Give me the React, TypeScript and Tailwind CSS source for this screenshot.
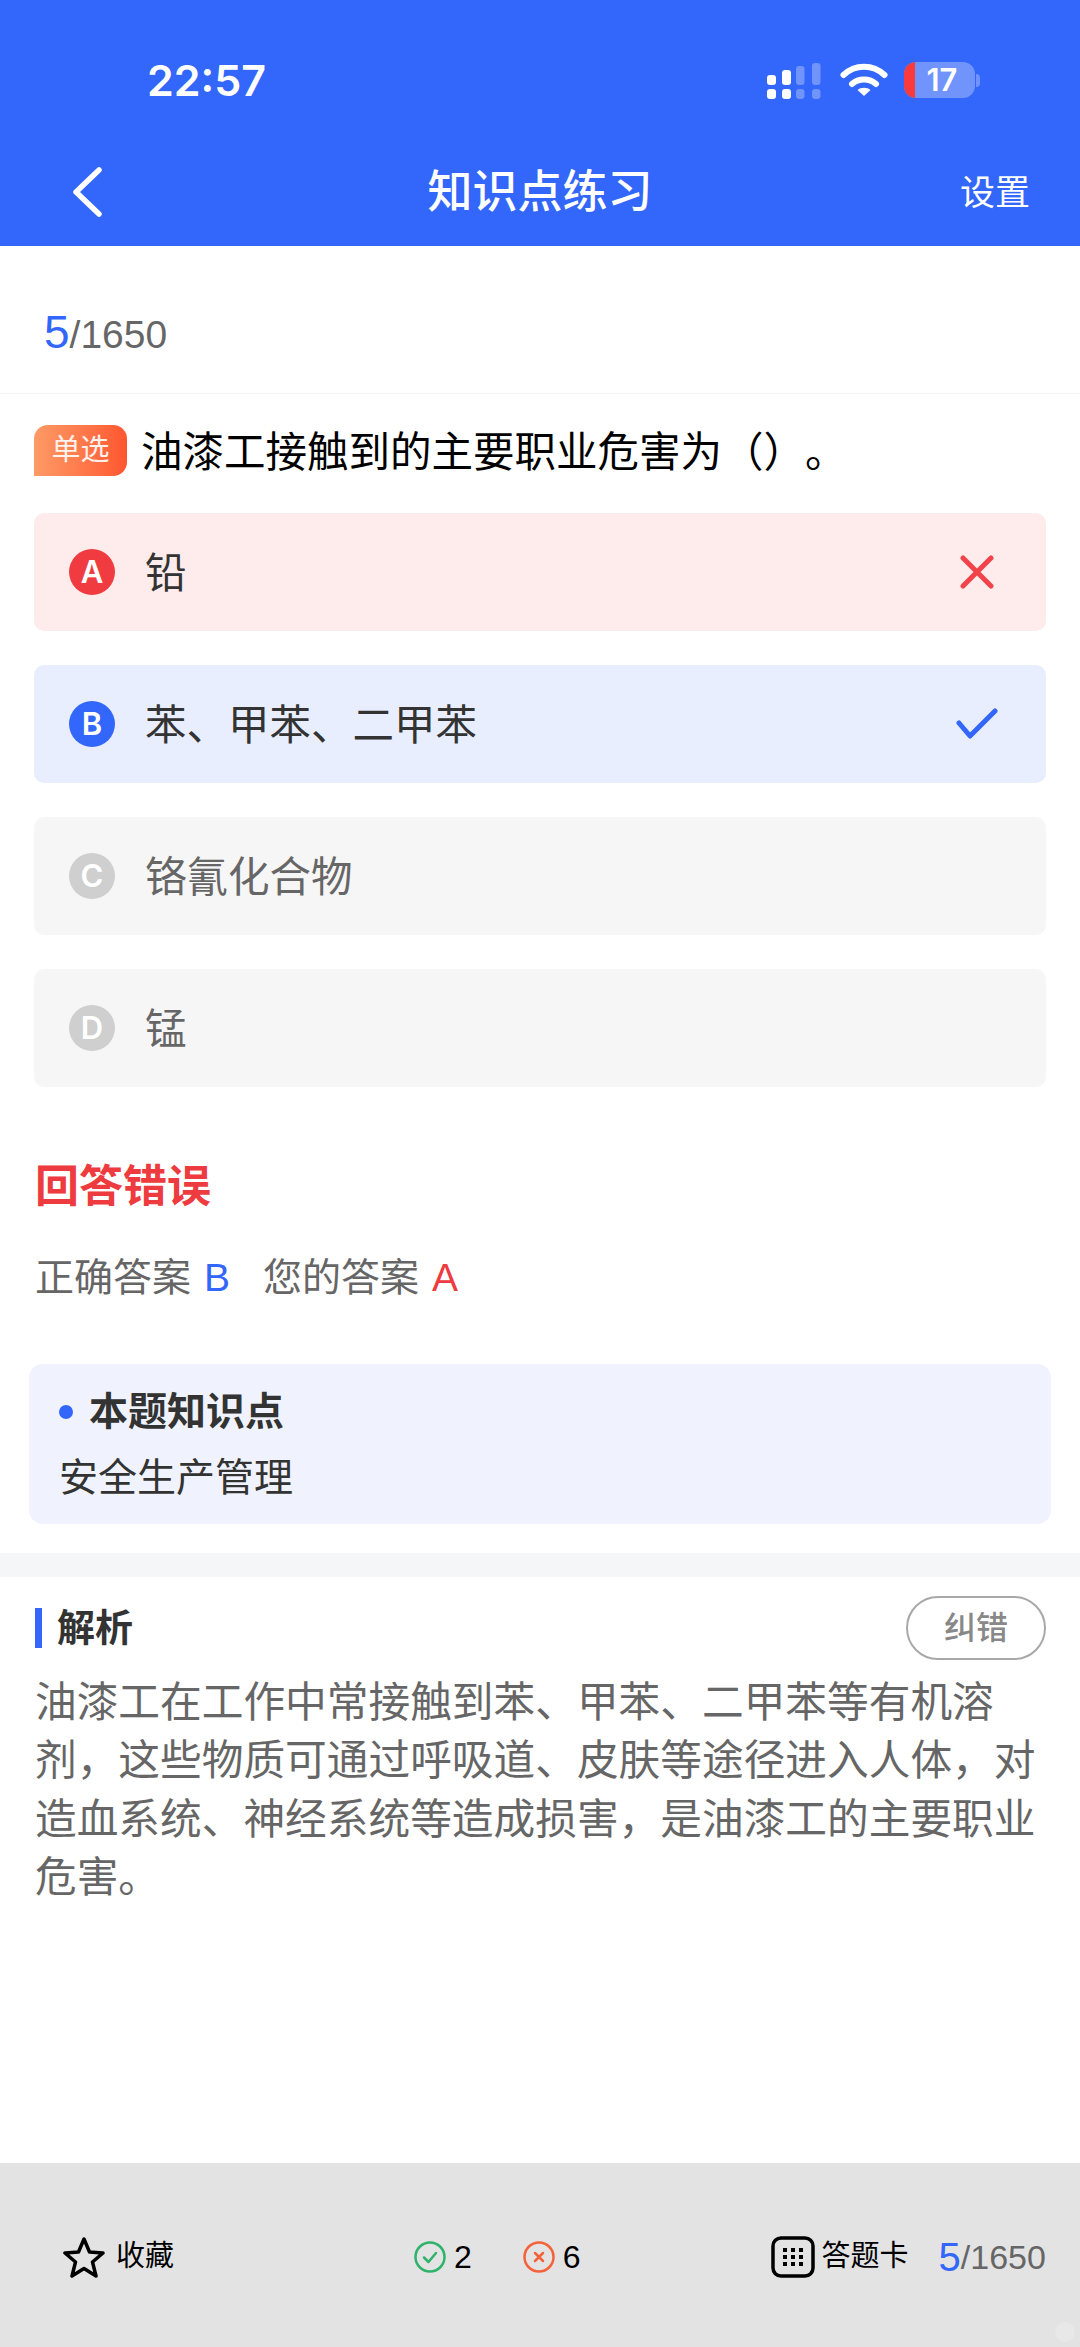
import React from 'react';

const FONT = "font-['Liberation_Sans','Noto_Sans_CJK_SC',sans-serif]";

const options = [
  { key: 'A', text: '铅', box: 'bg-[#feecec]', badge: 'bg-[#f03c41]', label: 'text-[#333333]', mark: 'wrong' },
  { key: 'B', text: '苯、甲苯、二甲苯', box: 'bg-[#e9eefe]', badge: 'bg-[#3366fa]', label: 'text-[#333333]', mark: 'right' },
  { key: 'C', text: '铬氰化合物', box: 'bg-[#f6f6f6]', badge: 'bg-[#cfcfcf]', label: 'text-[#666666]', mark: '' },
  { key: 'D', text: '锰', box: 'bg-[#f6f6f6]', badge: 'bg-[#cfcfcf]', label: 'text-[#666666]', mark: '' },
];

const StatusIcons = () => (
  <div className="flex items-center">
    <svg width="54" height="37" viewBox="0 0 54 37" fill="#fff">
      <rect x="0" y="13" width="9" height="10" rx="3" />
      <rect x="15" y="8" width="9" height="15" rx="3" />
      <rect x="29" y="4" width="8.5" height="19" rx="3" opacity="0.3" />
      <rect x="45" y="1" width="8.5" height="22" rx="3" opacity="0.3" />
      <rect x="0" y="27" width="9" height="10" rx="3" />
      <rect x="15" y="27" width="9" height="10" rx="3" />
      <rect x="29" y="27" width="8.5" height="10" rx="3" opacity="0.3" />
      <rect x="45" y="27" width="8.5" height="10" rx="3" opacity="0.3" />
    </svg>
    <svg className="ml-[19px]" width="48" height="34" viewBox="0 0 48 34" fill="none" stroke="#fff" strokeWidth="6" strokeLinecap="round">
      <path d="M3.5 12 C15 1 33 1 44.5 12" />
      <path d="M12 21 C18.5 15 29.5 15 36 21" />
      <path d="M24 33 L17.5 27 C21 24 27 24 30.5 27 Z" fill="#fff" stroke="none" />
    </svg>
    <div className="ml-[16px] flex items-center">
      <div className="flex h-[36px] w-[71px] overflow-hidden rounded-[12px] bg-white/30">
        <div className="h-full w-[11px] bg-[#fa3a3c]" />
        <div className="flex flex-1 items-center justify-center pr-[6px] font-['Inter',sans-serif] text-[31px] font-semibold text-white">17</div>
      </div>
      <div className="ml-[1px] h-[13px] w-[4px] rounded-r-full bg-white/30" />
    </div>
  </div>
);

const Mark = ({ type }: { type: string }) => {
  if (type === 'wrong') {
    return (
      <svg width="34" height="34" viewBox="0 0 34 34" fill="none" stroke="#f0444a" strokeWidth="5" strokeLinecap="round">
        <path d="M3 3 L31 31 M31 3 L3 31" />
      </svg>
    );
  }
  if (type === 'right') {
    return (
      <svg width="42" height="32" viewBox="0 0 42 32" fill="none" stroke="#3366fa" strokeWidth="5" strokeLinecap="round" strokeLinejoin="round">
        <path d="M3 15 L14 28 L39 3" />
      </svg>
    );
  }
  return null;
};

export default function App() {
  return (
    <div className={`flex min-h-[2347px] w-[1080px] flex-col bg-white ${FONT}`}>
      <header className="h-[246px] bg-[#3366fa] text-white">
        <div className="flex h-[52px] translate-y-[54px] items-center justify-between pl-[147px] pr-[100px]">
          <span className="font-['Inter',sans-serif] text-[43px] font-semibold leading-none">22:57</span>
          <StatusIcons />
        </div>
        <div className="mt-[98px] grid h-[86px] grid-cols-3 items-center px-[50px]">
          <svg className="-mt-[3px] ml-[22px]" width="30" height="50" viewBox="0 0 30 50" fill="none" stroke="#fff" strokeWidth="5.5" strokeLinecap="round" strokeLinejoin="round">
            <path d="M27 3 L4 25 L27 47" />
          </svg>
          <span className="whitespace-nowrap text-center text-[45px] font-medium">知识点练习</span>
          <span className="text-right text-[35px]">设置</span>
        </div>
      </header>

      <div className="flex h-[148px] items-baseline border-b border-[#f3f3f3] pl-[44px] pt-[56px]">
        <span className="text-[46px] leading-[60px] text-[#3366fa]">5</span>
        <span className="text-[39px] leading-[60px] text-[#666666]">/1650</span>
      </div>

      <div className="flex h-[119px] items-center pl-[34px] pb-[6px]">
        <span className="flex h-[51px] w-[93px] items-center justify-center rounded-[14px] rounded-bl-none bg-gradient-to-r from-[#ff9a66] to-[#ff552f] text-[29px] text-white/90">
          单选
        </span>
        <span className="ml-[14px] mt-[6px] text-[41.5px] text-black [text-spacing-trim:space-all]">油漆工接触到的主要职业危害为（）。</span>
      </div>

      <div className="flex flex-col gap-[34px] px-[34px]">
        {options.map((o) => (
          <div key={o.key} className={`flex h-[118px] items-center rounded-[10px] pl-[35px] pr-[47px] ${o.box}`}>
            <span className={`flex h-[46px] w-[46px] items-center justify-center rounded-full font-['Inter',sans-serif] text-[31px] font-semibold text-white ${o.badge}`}>
              {o.key}
            </span>
            <span className={`ml-[30px] flex-1 pt-[4px] text-[41.5px] ${o.label}`}>{o.text}</span>
            <div className="flex w-[44px] justify-center">
              <Mark type={o.mark} />
            </div>
          </div>
        ))}
      </div>

      <div className="mt-[70px] pl-[35px] text-[44px] font-bold leading-[60px] text-[#ee3b40]">回答错误</div>

      <div className="mt-[31px] flex items-center pl-[35px] text-[39px] leading-[60px] text-[#666666]">
        <span>正确答案</span>
        <span className="ml-[13px] text-[#3366fa]">B</span>
        <span className="ml-[33px]">您的答案</span>
        <span className="ml-[13px] text-[#ee3b40]">A</span>
      </div>

      <div className="mx-[29px] mt-[56px] h-[160px] rounded-[14px] bg-[#f0f3fe] px-[30px] pt-[20px]">
        <div className="flex items-center text-[39px] font-bold leading-[56px] text-[#333333]">
          <span className="h-[14px] w-[14px] rounded-full bg-[#3366fa]" />
          <span className="ml-[16px]">本题知识点</span>
        </div>
        <div className="mt-[10px] text-[39px] leading-[56px] text-[#333333]">安全生产管理</div>
      </div>

      <div className="mt-[29px] h-[24px] bg-[#f5f6f8]" />

      <div className="flex items-center justify-between pl-[35px] pr-[34px] pt-[19px]">
        <div className="flex items-center">
          <span className="h-[40px] w-[7px] bg-[#3366fa]" />
          <span className="ml-[15px] text-[38px] font-bold text-[#333333]">解析</span>
        </div>
        <span className="flex h-[64px] w-[140px] items-center justify-center rounded-full border-2 border-[#a8a8a8] text-[32px] font-medium text-[#888888]">
          纠错
        </span>
      </div>

      <p className="mt-[14px] px-[35px] text-[41.7px] leading-[58.4px] text-[#666666]">
        油漆工在工作中常接触到苯、甲苯、二甲苯等有机溶剂，这些物质可通过呼吸道、皮肤等途径进入人体，对造血系统、神经系统等造成损害，是油漆工的主要职业危害。
      </p>

      <div className="flex-1" />

      <footer className="relative flex h-[184px] items-center bg-[#e3e3e3] pt-[4px] text-black">
        <div className="flex w-[414px] items-center pl-[62px]">
          <svg width="44" height="42" viewBox="0 0 44 42" fill="none" stroke="#000" strokeWidth="3.5" strokeLinejoin="round">
            <path d="M22 3 L27.5 16 L41 17 L30.5 26 L34 40 L22 32.5 L10 40 L13.5 26 L3 17 L16.5 16 Z" />
          </svg>
          <span className="ml-[10px] text-[29px]">收藏</span>
        </div>
        <svg width="32" height="32" viewBox="0 0 32 32" fill="none" stroke="#2db36b" strokeWidth="2.5" strokeLinecap="round" strokeLinejoin="round">
          <circle cx="16" cy="16" r="14.5" />
          <path d="M10 16.5 L14.5 21 L22 12" />
        </svg>
        <span className="ml-[8px] text-[32px]">2</span>
        <svg className="ml-[51px]" width="32" height="32" viewBox="0 0 32 32" fill="none" stroke="#f4623a" strokeWidth="2.5" strokeLinecap="round">
          <circle cx="16" cy="16" r="14.5" />
          <path d="M12 12 L20 20 M20 12 L12 20" />
        </svg>
        <span className="ml-[8px] text-[32px]">6</span>
        <svg className="ml-[190px]" width="44" height="42" viewBox="0 0 44 42" fill="none">
          <rect x="2" y="2" width="40" height="38" rx="8" stroke="#000" strokeWidth="3.5" />
          <g fill="#000">
            <rect x="12" y="12" width="4" height="4" />
            <rect x="20" y="12" width="4" height="4" />
            <rect x="28" y="12" width="4" height="4" />
            <rect x="12" y="19" width="4" height="4" />
            <rect x="20" y="19" width="4" height="4" />
            <rect x="28" y="19" width="4" height="4" />
            <rect x="12" y="26" width="4" height="4" />
            <rect x="20" y="26" width="4" height="4" />
            <rect x="28" y="26" width="4" height="4" />
          </g>
        </svg>
        <span className="ml-[7px] text-[29px]">答题卡</span>
        <span className="ml-[30px] text-[40px] text-[#3366fa]">5</span>
        <span className="text-[34px] text-[#666666]">/1650</span>
        <span className="absolute bottom-[5px] right-[5px] h-[20px] w-[20px] rounded-full bg-[#e8e8e8]" />
      </footer>
    </div>
  );
}
